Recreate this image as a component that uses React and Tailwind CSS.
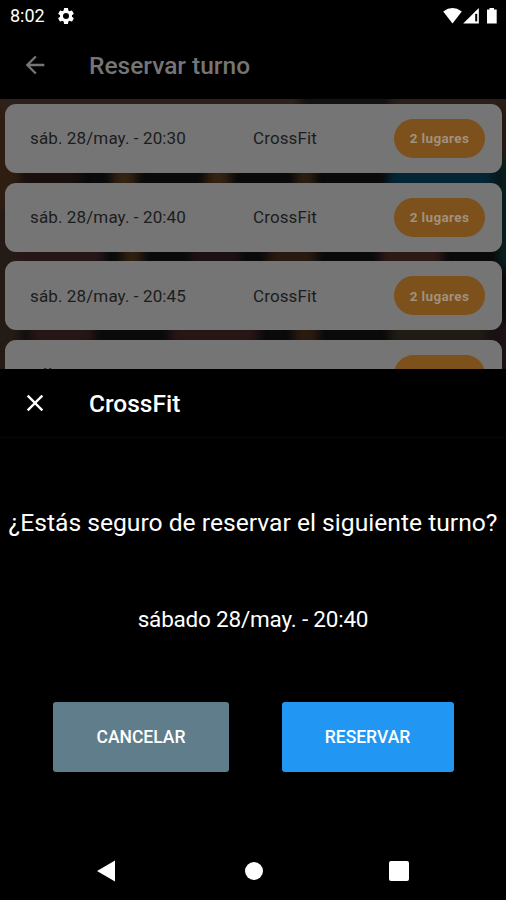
import React from 'react';

const turnos = [
  { id: 1, fecha: 'sáb. 28/may. - 20:30', clase: 'CrossFit', lugares: '2 lugares' },
  { id: 2, fecha: 'sáb. 28/may. - 20:40', clase: 'CrossFit', lugares: '2 lugares' },
  { id: 3, fecha: 'sáb. 28/may. - 20:45', clase: 'CrossFit', lugares: '2 lugares' },
  { id: 4, fecha: 'sáb.', clase: '', lugares: '' },
];

const StatusBar = () => {
  return (
    <div className="flex h-8 items-center justify-between pl-[10px] pr-[8px] text-white">
      <div className="flex items-center">
        <span className="w-[46px] text-[18px] leading-8">8:02</span>
        <svg className="h-[20px] w-[20px]" viewBox="0 0 24 24" fill="currentColor">
          <path d="M19.14 12.94c.04-.3.06-.61.06-.94s-.02-.64-.07-.94l2.03-1.58a.49.49 0 0 0 .12-.61l-1.92-3.32a.49.49 0 0 0-.59-.22l-2.39.96a7 7 0 0 0-1.62-.94l-.36-2.54a.48.48 0 0 0-.48-.41h-3.84a.48.48 0 0 0-.47.41l-.36 2.54c-.59.24-1.13.57-1.62.94l-2.39-.96a.48.48 0 0 0-.59.22L2.74 8.87a.48.48 0 0 0 .12.61l2.03 1.58c-.05.3-.09.63-.09.94s.02.64.07.94l-2.03 1.58a.49.49 0 0 0-.12.61l1.92 3.32c.12.22.37.29.59.22l2.39-.96c.5.38 1.03.7 1.62.94l.36 2.54c.05.24.24.41.48.41h3.84c.24 0 .44-.17.47-.41l.36-2.54a6.8 6.8 0 0 0 1.62-.94l2.39.96c.22.08.47 0 .59-.22l1.92-3.32a.48.48 0 0 0-.12-.61zM12 15.6a3.6 3.6 0 1 1 0-7.2 3.6 3.6 0 0 1 0 7.2" />
        </svg>
      </div>
      <svg className="h-[18px] w-[56px]" viewBox="0 0 56 18" fill="currentColor">
        <path d="M1.2 4.4Q10.5-2.2 19.8 4.4L10.5 16.4z" />
        <path d="M36.8 1v15.6H21.2z" />
        <path d="M33.2 6.8h2v7.6h-2z" className="fill-black" />
        <path d="M47.5 1h4.5v1.5h2.7v14H45v-14h2.5z" />
      </svg>
    </div>
  );
};

const Backdrop = () => {
  return (
    <svg className="absolute inset-0 h-full w-full" viewBox="0 0 506 270" preserveAspectRatio="none">
      <defs>
        <filter id="soft" x="-20%" y="-20%" width="140%" height="140%" colorInterpolationFilters="sRGB">
          <feGaussianBlur stdDeviation="5" />
        </filter>
      </defs>
      <rect width="506" height="270" fill="#0a0a0b" />
      <g filter="url(#soft)">
        <rect x="-20" y="-20" width="42" height="140" fill="#2f1d12" />
        <rect x="20" y="60" width="60" height="36" fill="#190f0c" />
        <rect x="-20" y="110" width="42" height="180" fill="#241a16" />
        <rect x="0" y="-20" width="300" height="34" fill="#2d221b" />
        <rect x="300" y="-20" width="90" height="34" fill="#101214" />
        <rect x="390" y="-20" width="140" height="34" fill="#2a1f19" />
        <rect x="112" y="66" width="24" height="26" fill="#342212" />
        <rect x="206" y="66" width="24" height="26" fill="#342212" />
        <rect x="296" y="66" width="18" height="26" fill="#2d1f10" />
        <rect x="388" y="66" width="106" height="26" fill="#032636" />
        <rect x="498" y="0" width="30" height="60" fill="#2a1a12" />
        <rect x="498" y="60" width="30" height="110" fill="#08201f" />
        <rect x="20" y="144" width="84" height="26" fill="#261717" />
        <rect x="122" y="144" width="20" height="26" fill="#302010" />
        <rect x="190" y="144" width="50" height="26" fill="#1c1112" />
        <rect x="268" y="144" width="48" height="26" fill="#281a10" />
        <rect x="380" y="144" width="62" height="26" fill="#2d1a16" />
        <rect x="30" y="222" width="64" height="26" fill="#261716" />
        <rect x="170" y="222" width="88" height="26" fill="#281615" />
        <rect x="294" y="222" width="24" height="26" fill="#2a1b0f" />
        <rect x="390" y="222" width="98" height="26" fill="#201b15" />
        <rect x="490" y="222" width="30" height="60" fill="#1a1115" />
      </g>
    </svg>
  );
};

const Turno = ({ fecha, clase, lugares }) => {
  return (
    <div className="flex h-[69px] shrink-0 items-center rounded-[11px] bg-[#757575] pl-[25px] pr-[17px] text-[17px] tracking-[0.12px] text-[#1c1c1c]">
      <span className="w-[223px] pt-px">{fecha}</span>
      <span className="flex-1 pt-px">{clase}</span>
      <span className="flex h-[39px] w-[91px] items-center justify-center rounded-full bg-[#7d511b] text-[13.5px] font-bold tracking-[0.35px] text-[#a0917f]">
        {lugares}
      </span>
    </div>
  );
};

const NavBar = () => {
  return (
    <div className="flex h-[58px] items-center justify-between px-[97px] text-white">
      <svg className="h-[22px] w-[19px]" viewBox="0 0 19 22" fill="currentColor">
        <path d="M18 .5v21L0 11z" />
      </svg>
      <div className="ml-[2px] h-[18px] w-[18px] rounded-full bg-white" />
      <div className="h-[20px] w-[20px] rounded-[2px] bg-white" />
    </div>
  );
};

const App = () => {
  return (
    <div className="flex h-[900px] w-[506px] flex-col overflow-hidden bg-black font-['Roboto',sans-serif]">
      <StatusBar />
      <header className="flex h-[67px] items-center pb-px pl-[21px] text-[#757575]">
        <svg className="h-[28px] w-[28px]" viewBox="0 0 24 24" fill="currentColor">
          <path d="M20 11H7.83l5.59-5.59L12 4l-8 8 8 8 1.41-1.41L7.83 13H20z" />
        </svg>
        <h1 className="ml-[40px] pt-[2px] text-[24.5px] font-medium">Reservar turno</h1>
      </header>

      <main className="relative h-[270px] shrink-0 overflow-hidden">
        <Backdrop />
        <div className="relative flex flex-col gap-[9.7px] pl-[5px] pr-[4px] pt-[5px]">
          {turnos.map((turno) => (
            <Turno key={turno.id} {...turno} />
          ))}
        </div>
      </main>

      <section className="flex flex-1 flex-col bg-black text-white">
        <div className="flex h-[69px] items-center border-b border-[#080808] pl-[21px]">
          <svg className="h-[28px] w-[28px]" viewBox="0 0 24 24" fill="currentColor">
            <path d="M19 6.41L17.59 5 12 10.59 6.41 5 5 6.41 10.59 12 5 17.59 6.41 19 12 13.41 17.59 19 19 17.59 13.41 12z" />
          </svg>
          <h2 className="ml-[40px] pt-[2px] text-[24.5px] font-medium">CrossFit</h2>
        </div>
        <p className="mt-[67px] whitespace-nowrap text-center text-[24.65px] leading-9">
          ¿Estás seguro de reservar el siguiente turno?
        </p>
        <p className="mt-[60px] text-center text-[22.5px] leading-9 tracking-[-0.2px]">sábado 28/may. - 20:40</p>
        <div className="mt-[65px] flex pl-[53px] text-[17.5px] font-medium">
          <button className="h-[70px] w-[176px] rounded-[3px] bg-[#607d8b]">CANCELAR</button>
          <button className="ml-[53px] h-[70px] w-[172px] rounded-[3px] bg-[#2196f3] pr-px">RESERVAR</button>
        </div>
      </section>
      <NavBar />
    </div>
  );
};

export default App;
